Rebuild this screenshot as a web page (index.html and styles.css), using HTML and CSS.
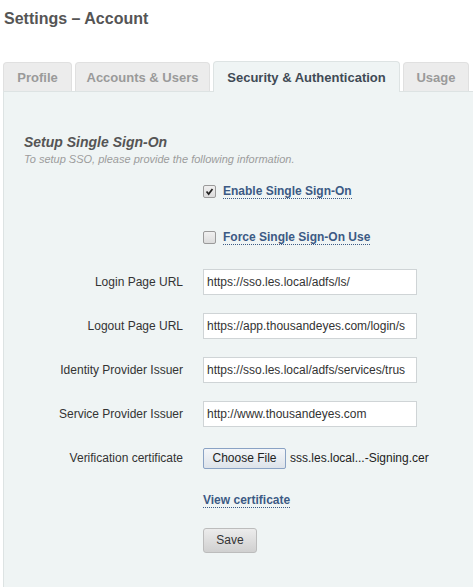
FILE: index.html
```html
<!DOCTYPE html>
<html>
<head>
<meta charset="utf-8">
<link rel="stylesheet" href="styles.css">
</head>
<body>
<h1 class="title">Settings – Account</h1>
<div class="tabs">
  <div class="tab tab-profile">Profile</div>
  <div class="tab tab-accounts">Accounts &amp; Users</div>
  <div class="tab tab-security active">Security &amp; Authentication</div>
  <div class="tab tab-usage">Usage</div>
</div>
<div class="panel">
  <div class="section-title">Setup Single Sign-On</div>
  <div class="section-sub">To setup SSO, please provide the following information.</div>
  <div class="form">
    <div class="row row-check">
      <div class="label"></div>
      <div class="field"><span class="cb checked"><svg viewBox="0 0 13 13" width="13" height="13"><path d="M3 6.5 L5.5 9.5 L10 3.5" fill="none" stroke="#222" stroke-width="2"/></svg></span><span class="link">Enable Single Sign-On</span></div>
    </div>
    <div class="row row-check">
      <div class="label"></div>
      <div class="field"><span class="cb"></span><span class="link">Force Single Sign-On Use</span></div>
    </div>
    <div class="row">
      <div class="label">Login Page URL</div>
      <div class="field"><div class="input">https://sso.les.local/adfs/ls/</div></div>
    </div>
    <div class="row">
      <div class="label">Logout Page URL</div>
      <div class="field"><div class="input">https://app.thousandeyes.com/login/s</div></div>
    </div>
    <div class="row">
      <div class="label">Identity Provider Issuer</div>
      <div class="field"><div class="input">https://sso.les.local/adfs/services/trus</div></div>
    </div>
    <div class="row">
      <div class="label">Service Provider Issuer</div>
      <div class="field"><div class="input">http://www.thousandeyes.com</div></div>
    </div>
    <div class="row">
      <div class="label">Verification certificate</div>
      <div class="field"><span class="file-btn">Choose File</span><span class="file-name">sss.les.local...-Signing.cer</span></div>
    </div>
    <div class="row row-link">
      <div class="label"></div>
      <div class="field"><span class="link">View certificate</span></div>
    </div>
    <div class="row row-save">
      <div class="label"></div>
      <div class="field"><span class="save">Save</span></div>
    </div>
  </div>
</div>
</body>
</html>
```

FILE: styles.css
```css
html, body {
  margin: 0;
  padding: 0;
  background: #ffffff;
  font-family: "Liberation Sans", Arial, sans-serif;
  height: 587px;
  overflow: hidden;
}
.title {
  margin: 0;
  padding: 9px 0 0 4px;
  font-size: 16px;
  line-height: 20px;
  font-weight: bold;
  color: #555555;
  height: 52px;
  box-sizing: border-box;
}
.tabs {
  display: flex;
  gap: 3px;
  padding-left: 3px;
  height: 30px;
  margin-top: 9px;
  align-items: flex-end;
}
.tab {
  box-sizing: border-box;
  height: 29px;
  border: 1px solid #e0e0e0;
  border-bottom: none;
  border-radius: 4px 4px 0 0;
  background: #ececec;
  color: #9a9a9a;
  font-size: 13px;
  font-weight: bold;
  display: flex;
  align-items: center;
  justify-content: center;
  padding-top: 1px;
}
.tab-profile { width: 69px; }
.tab-accounts { width: 135px; }
.tab-security { width: 187px; }
.tab-usage { width: 66px; }
.tab.active {
  height: 31px;
  background: #eff4f4;
  color: #3f4a55;
  border-color: #dde3e3;
  margin-bottom: -1px;
  position: relative;
}
.panel {
  box-sizing: border-box;
  margin-left: 3px;
  width: 472px;
  height: 500px;
  background: #eff4f4;
  border: 1px solid #dde3e3;
  border-right: none;
  border-bottom: none;
  padding: 42px 0 0 20px;
}
.section-title {
  font-size: 14px;
  line-height: 17px;
  font-weight: bold;
  font-style: italic;
  color: #555555;
}
.section-sub {
  font-size: 11px;
  line-height: 15px;
  font-style: italic;
  color: #9c9c9c;
  margin-top: 1px;
}
.form {
  display: flex;
  flex-direction: column;
  margin-top: 1px;
}
.row {
  display: grid;
  grid-template-columns: 159px auto;
  column-gap: 20px;
  align-items: center;
  height: 44px;
}
.row-check { height: 46px; }
.row-link { height: 40px; }
.row-save { height: 40px; }
.label {
  text-align: right;
  font-size: 12px;
  color: #333333;
}
.field {
  display: flex;
  align-items: center;
  font-size: 12px;
  color: #333333;
}
.cb {
  box-sizing: border-box;
  width: 13px;
  height: 13px;
  border: 1px solid #9a9a9a;
  border-radius: 2px;
  background: linear-gradient(#f0f0f0, #dcdcdc);
  margin-right: 7px;
  display: inline-flex;
  align-items: center;
  justify-content: center;
}
.cb svg { display: block; width: 11px; height: 11px; }
.link {
  font-size: 12px;
  font-weight: bold;
  color: #3c5a84;
  border-bottom: 1px dotted #3c5a84;
  line-height: 14px;
}
.input {
  box-sizing: border-box;
  width: 214px;
  height: 26px;
  background: #ffffff;
  border: 1px solid #cfd4d6;
  padding: 0 3px;
  line-height: 24px;
  font-size: 12px;
  color: #333333;
  white-space: nowrap;
  overflow: hidden;
}
.file-btn {
  box-sizing: border-box;
  width: 83px;
  height: 21px;
  border: 1px solid #8aa2c4;
  border-radius: 2px;
  background: linear-gradient(#f4f6f9, #dde3ea);
  display: inline-flex;
  align-items: center;
  justify-content: center;
  font-size: 12px;
  color: #222222;
}
.file-name {
  margin-left: 4px;
  font-size: 12px;
  color: #222222;
}
.save {
  box-sizing: border-box;
  width: 54px;
  height: 25px;
  border: 1px solid #bcbcbc;
  border-radius: 3px;
  background: linear-gradient(#ececec, #d0d0d0);
  display: inline-flex;
  align-items: center;
  justify-content: center;
  font-size: 12px;
  color: #333333;
}
```
